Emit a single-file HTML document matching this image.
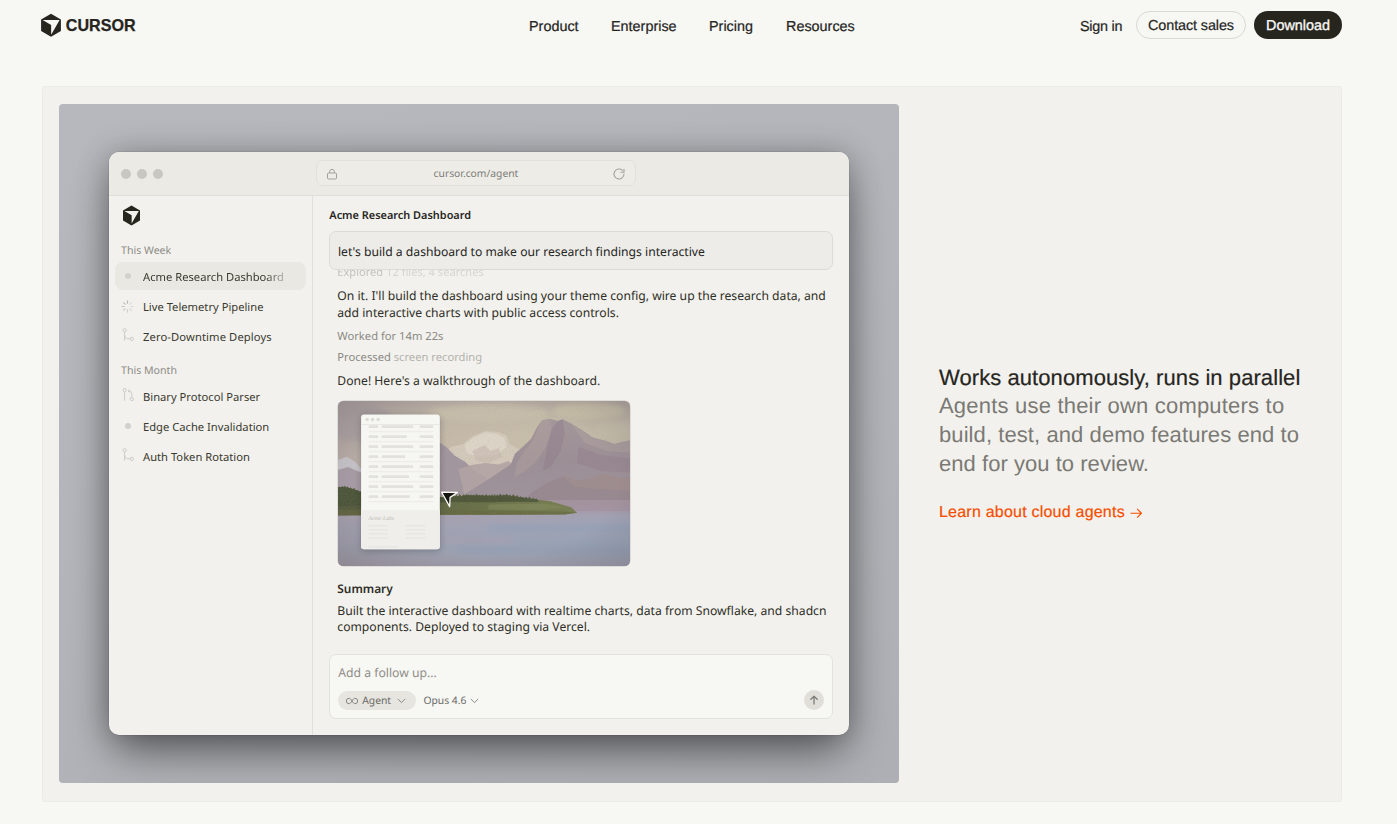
<!DOCTYPE html>
<html lang="en">
<head>
<meta charset="utf-8">
<title>Cursor</title>
<style>
*{box-sizing:border-box;margin:0;padding:0}
html,body{width:1397px;height:824px;overflow:hidden}
body{background:#f7f7f4;font-family:"Liberation Sans",sans-serif;color:#26251e;position:relative}
a{color:inherit;text-decoration:none}
/* ---------- top nav ---------- */
.nav{position:absolute;left:0;top:0;width:1397px;height:52px}
.logo{position:absolute;left:40px;top:13px;width:100px;height:26px}
.menu{position:absolute;top:17.6px;left:529px;font-size:14.4px;line-height:18px;white-space:nowrap;text-rendering:geometricPrecision;-webkit-text-stroke:.2px #26251e}
.menu a{position:absolute;top:0}
.signin{position:absolute;left:1080px;top:17.6px;font-size:14.4px;line-height:18px;text-rendering:geometricPrecision;-webkit-text-stroke:.2px #26251e;letter-spacing:-.25px;white-space:nowrap}
.btn{position:absolute;top:11.3px;height:27.8px;border-radius:14px;font-size:14.4px;line-height:29.6px;text-align:center;white-space:nowrap;text-rendering:geometricPrecision}
.btn.ghost{left:1136px;width:110px;border:1px solid #d9d8d3;background:#f7f7f4;-webkit-text-stroke:.2px #26251e;letter-spacing:-.1px}
.btn.dark{left:1254px;width:88px;background:#26251e;color:#f7f7f4;line-height:31.6px;-webkit-text-stroke:.35px #f7f7f4}
/* ---------- feature card ---------- */
.card{position:absolute;left:42px;top:86px;width:1300px;height:715.500px;background:#f2f1ed;border-radius:4px;box-shadow:inset 0 0 0 1px rgba(38,37,30,.03)}
.media{position:absolute;left:17px;top:17.5px;width:840px;height:679.500px;border-radius:4px;overflow:hidden;
  background:linear-gradient(160deg,#b6b8bd 0%,#b3b5ba 45%,#adafb4 100%)}
.copy{position:absolute;left:897px;top:277px;width:380px}
.copy h3{font-size:22px;line-height:29px;font-weight:400;color:#26251e;white-space:nowrap;text-rendering:geometricPrecision;-webkit-text-stroke:.2px #26251e}
.copy p{font-size:22px;line-height:29px;color:#7a7974;white-space:nowrap;text-rendering:geometricPrecision;margin-top:-.8px}
.copy p span{display:block}
.copy h3{letter-spacing:.075px}
.copy .l1{letter-spacing:.2px}.copy .l2{letter-spacing:.08px}.copy .l3{letter-spacing:.04px}
.copy .more svg{display:inline-block;vertical-align:-1px;margin-left:5px}
.copy .more{display:block;margin-top:24.8px;font-size:16px;line-height:20px;color:#f54e00;white-space:nowrap;text-rendering:geometricPrecision;letter-spacing:.22px;-webkit-text-stroke:.2px #f54e00}
/* ---------- browser window ---------- */
.win{position:absolute;left:50px;top:48px;width:740px;height:583.5px;border-radius:10px;background:#f2f1ed;
  box-shadow:0 24px 46px -8px rgba(0,0,0,.42),0 3px 32px rgba(0,0,0,.3),0 0 0 .5px rgba(0,0,0,.12);overflow:hidden;
  font-family:"DejaVu Sans","Liberation Sans",sans-serif}
.bar{position:absolute;left:0;top:0;width:740px;height:44.1px;background:#ebeae5;border-bottom:1px solid #dfded9}
.side{position:absolute;left:0;top:43px;width:204px;height:541px;border-right:1px solid #e1e0db}
.main{position:absolute;left:204px;top:43px;width:536px;height:541px}

.win, .win *{font-family:"Noto Sans","WenQuanYi Zen Hei","Liberation Sans",sans-serif;font-size-adjust:.536;text-rendering:geometricPrecision}
.tl{position:absolute;top:17px;width:10px;height:10px;border-radius:50%;background:#c8c7c1}
.url{position:absolute;left:207.3px;top:8.300px;width:319.3px;height:26.300px;border-radius:7px;background:#edece7;border:1px solid #e1e0db}
.url span{position:absolute;left:0;right:0;top:6px;text-align:center;font-size:10.3px;line-height:14px;color:#7d7c76}
.url svg{position:absolute}
.sb-logo{position:absolute;left:13px;top:10.5px;width:19px;height:21px}
.grp{position:absolute;left:12px;margin-top:1.3px;font-size:10.6px;line-height:14px;color:#8d8c86;white-space:nowrap}
.row{position:absolute;left:6px;width:191px;height:28px;border-radius:8px}
.row.sel{background:#e9e8e3}
.row span{position:absolute;left:28px;top:7.8px;font-size:11.2px;line-height:15px;color:#3a392f;white-space:nowrap}
.row svg{position:absolute;left:6px;top:5px;width:14px;height:16px}
.row i{position:absolute;left:10px;top:10.5px;width:6.4px;height:6.4px;border-radius:50%;background:#d2d1cb}
.h{position:absolute;left:16.300px;top:13.6px;font-size:11.05px;font-weight:600;line-height:16px;color:#26251e;white-space:nowrap}
.prompt{position:absolute;left:16.2px;top:36.6px;width:503.6px;height:39.3px;border-radius:7px;background:#edece8;border:1px solid #dcdbd5;z-index:3}
.prompt span{position:absolute;left:7.8px;top:10.7px;font-size:12.17px;line-height:17px;color:#26251e;white-space:nowrap}
.t{position:absolute;left:24.3px;font-size:12.17px;line-height:17px;color:#2f2e27;white-space:nowrap}
.g{position:absolute;left:24.3px;font-size:11.2px;line-height:15px;color:#8a8983;white-space:nowrap}
.g em{font-style:normal;color:#b3b2ac}
.vid{position:absolute;left:24.9px;top:206.700px;width:292px;height:165px;border-radius:5.500px;overflow:hidden;box-shadow:0 0 0 .5px rgba(90,80,80,.25)}
.fu{position:absolute;left:16.2px;top:459.8px;width:503.6px;height:65px;border-radius:7px;background:#f7f7f4;border:1px solid #e3e2dd}
.fu .ph{position:absolute;left:8.1px;top:9px;font-size:12.2px;line-height:17px;color:#8f8e88}
.pill{position:absolute;left:7.6px;top:35.6px;width:77.8px;height:19.6px;border-radius:10px;background:#e6e5e0}
.pill span,.model span{position:absolute;top:2.9px;font-size:10.3px;line-height:14px;color:#6b6a64;white-space:nowrap}
.model{position:absolute;left:93.3px;top:35.6px;width:60px;height:19.5px}
.send{position:absolute;left:473.700px;top:35px;width:19.800px;height:19.800px;border-radius:50%;background:#e0dfda}
</style>
</head>
<body>
<div class="nav">
  <svg class="logo" viewBox="0 0 100 26">
    <path d="M11 .7 L20.900 6.400 L20.900 18.100 L11 23.800 L1.100 18.100 L1.100 6.400 Z" fill="#26251e"/>
    <path d="M2.600 7 L19.600 7 L11.150 21.800 L11.150 11.900 Z" fill="#f7f7f4"/>
    <text x="25.800" y="17.700" font-family="Liberation Sans, sans-serif" font-weight="700" font-size="15.700" fill="#26251e" stroke="#26251e" stroke-width=".25" textLength="69.800" lengthAdjust="spacingAndGlyphs">CURSOR</text>
  </svg>
  <div class="menu">
    <a style="left:0">Product</a>
    <a style="left:82px">Enterprise</a>
    <a style="left:180px">Pricing</a>
    <a style="left:257px">Resources</a>
  </div>
  <a class="signin">Sign in</a>
  <a class="btn ghost">Contact sales</a>
  <a class="btn dark">Download</a>
</div>

<div class="card">
  <div class="media">
    <div class="win">
      <div class="bar">
        <i class="tl" style="left:12px"></i><i class="tl" style="left:28px"></i><i class="tl" style="left:44px"></i>
        <div class="url">
          <svg style="left:9px;top:6.900px" width="12" height="12" viewBox="0 0 12 12" fill="none" stroke="#a09f99" stroke-width=".95"><rect x="1.5" y="5" width="9" height="6" rx="1"/><path d="M3.7 5V3.6a2.3 2.3 0 0 1 4.6 0V5"/></svg>
          <span>cursor.com/agent</span>
          <svg style="left:294.800px;top:6px" width="14" height="14" viewBox="0 0 14 14" fill="none" stroke="#a3a29c" stroke-width="1.1" stroke-linecap="round" stroke-linejoin="round"><path d="M12 7a5 5 0 1 1-1.6-3.7"/><path d="M12 2.2v3h-3"/></svg>
        </div>
      </div>
      <div class="side">
        <svg class="sb-logo" viewBox="0 0 19 21"><path d="M9.5 .6 L18 5.4 L18 15.4 L9.5 20.4 L1 15.4 L1 5.4 Z" fill="#26251e"/><path d="M2.400 6 L16.800 6 L9.650 18.600 L9.650 10.200 Z" fill="#f2f1ed"/></svg>
        <div class="grp" style="top:48.5px">This Week</div>
        <div class="row sel" style="top:67.5px"><i></i><span style="-webkit-mask-image:linear-gradient(90deg,#000 86%,rgba(0,0,0,.3) 100%)">Acme Research Dashboard</span></div>
        <div class="row" style="top:97.5px"><svg style="top:7.500px;left:6.200px;width:13px;height:13px" viewBox="0 0 14 14" fill="none" stroke-width="1.200" stroke-linecap="round"><path d="M7 1v2.6" stroke="#b9b8b2"/><path d="M11.2 2.8 9.4 4.6" stroke="#dddcd6"/><path d="M13 7h-2.6" stroke="#d9d8d2"/><path d="M11.2 11.2 9.4 9.4" stroke="#d5d4ce"/><path d="M7 13v-2.6" stroke="#d0cfc9"/><path d="M2.8 11.2 4.6 9.4" stroke="#cbcac4"/><path d="M1 7h2.6" stroke="#c6c5bf"/><path d="M2.8 2.8 4.6 4.6" stroke="#c0bfb9"/></svg><span>Live Telemetry Pipeline</span></div>
        <div class="row" style="top:127.5px"><svg viewBox="0 0 14 16" fill="none" stroke="#cdccc6" stroke-width="1"><circle cx="3.600" cy="3.200" r="1.600"/><circle cx="10.800" cy="11.900" r="1.600"/><path d="M3.600 4.800v8.800"/><path d="M3.600 8.200c0 2.600 1.800 3.700 5.600 3.700"/></svg><span style="letter-spacing:.115px">Zero-Downtime Deploys</span></div>
        <div class="grp" style="top:168.5px">This Month</div>
        <div class="row" style="top:187.5px"><svg viewBox="0 0 14 16" fill="none" stroke="#cdccc6" stroke-width="1"><circle cx="3.600" cy="3.100" r="1.600"/><circle cx="10.800" cy="12.100" r="1.600"/><path d="M3.600 4.700v9.100"/><path d="M10.800 10.500V6.800a2.800 2.800 0 0 0-2.800-2.800H7.200"/><path d="M8.600 2.400 7 4l1.600 1.600"/></svg><span>Binary Protocol Parser</span></div>
        <div class="row" style="top:217.5px"><i></i><span>Edge Cache Invalidation</span></div>
        <div class="row" style="top:247.5px"><svg viewBox="0 0 14 16" fill="none" stroke="#cdccc6" stroke-width="1"><circle cx="3.600" cy="3.200" r="1.600"/><circle cx="10.800" cy="11.900" r="1.600"/><path d="M3.600 4.800v8.800"/><path d="M3.600 8.200c0 2.600 1.800 3.700 5.600 3.700"/></svg><span>Auth Token Rotation</span></div>
      </div>
      <div class="main">
        <div class="h">Acme Research Dashboard</div>
        <div class="g" style="top:70.4px;opacity:.45;font-size:11.1px">Explored <em>12 files, 4 searches</em></div>
        <div class="prompt"><span>let's build a dashboard to make our research findings interactive</span></div>
        <div class="t" style="top:92.5px"><span>On it. I'll build the dashboard using your theme config, wire up the research data, and</span><br><span>add interactive charts with public access controls.</span></div>
        <div class="g" style="top:134.7px">Worked for 14m 22s</div>
        <div class="g" style="top:155.9px">Processed <em>screen recording</em></div>
        <div class="t" style="top:177.5px">Done! Here's a walkthrough of the dashboard.</div>
        <div class="vid"><svg width="293" height="165" viewBox="0 0 292 165" preserveAspectRatio="none" style="display:block">
<defs>
<linearGradient id="sky" x1="0" y1="0" x2="1" y2="0"><stop offset="0" stop-color="#b3a8a4"/><stop offset=".35" stop-color="#c6bba9"/><stop offset=".7" stop-color="#c9c0aa"/><stop offset="1" stop-color="#c3bba8"/></linearGradient>
<linearGradient id="skyv" x1="0" y1="0" x2="0" y2="1"><stop offset="0" stop-color="#a79d9c" stop-opacity=".55"/><stop offset=".25" stop-color="#c9bfab" stop-opacity="0"/><stop offset=".6" stop-color="#c7b9b0" stop-opacity=".5"/></linearGradient>
<linearGradient id="lake" x1="0" y1="0" x2="0" y2="1"><stop offset="0" stop-color="#aba3b4"/><stop offset=".3" stop-color="#a1a6ba"/><stop offset=".62" stop-color="#98a5b8"/><stop offset="1" stop-color="#9e9dae"/></linearGradient>
<linearGradient id="lk2" x1="0" y1="0" x2="1" y2="0"><stop offset="0" stop-color="#a39a9f" stop-opacity=".45"/><stop offset=".55" stop-color="#a39a9f" stop-opacity=".12"/><stop offset="1" stop-color="#8fa0b4" stop-opacity=".25"/></linearGradient>
<linearGradient id="mtn" x1="0" y1="0" x2="0" y2="1"><stop offset="0" stop-color="#a4979a"/><stop offset=".5" stop-color="#9c8f96"/><stop offset="1" stop-color="#a0949c"/></linearGradient>
<linearGradient id="grn" x1="0" y1="0" x2="1" y2="0"><stop offset="0" stop-color="#52593b"/><stop offset=".35" stop-color="#5f6641"/><stop offset=".7" stop-color="#6c7449"/><stop offset="1" stop-color="#787f52"/></linearGradient>
<radialGradient id="vig" cx=".5" cy=".5" r=".75"><stop offset=".6" stop-color="#5a4f5a" stop-opacity="0"/><stop offset="1" stop-color="#5a5058" stop-opacity=".3"/></radialGradient>
<filter id="b1" x="-5%" y="-5%" width="110%" height="110%"><feGaussianBlur stdDeviation=".65"/></filter>
<filter id="b2" x="-5%" y="-5%" width="110%" height="110%"><feGaussianBlur stdDeviation=".6"/></filter>
<filter id="b3" x="-10%" y="-10%" width="120%" height="120%"><feGaussianBlur stdDeviation="2.500"/></filter>
<filter id="grain" x="0" y="0" width="100%" height="100%"><feTurbulence type="fractalNoise" baseFrequency=".9" numOctaves="2" seed="4"/><feColorMatrix values="0 0 0 0 .35  0 0 0 0 .3  0 0 0 0 .32  0 0 0 .9 -.32"/></filter>
<filter id="ws" x="-20%" y="-10%" width="140%" height="125%"><feGaussianBlur stdDeviation="3"/></filter>
</defs>
<rect width="292" height="165" fill="url(#sky)"/>
<rect width="292" height="165" fill="url(#skyv)"/>
<g filter="url(#b3)"><ellipse cx="150" cy="12" rx="60" ry="9" fill="#cbc2ad" opacity=".7"/><ellipse cx="250" cy="10" rx="36" ry="8" fill="#cec6aa" opacity=".85"/><ellipse cx="18" cy="22" rx="40" ry="18" fill="#a9a0a1" opacity=".75"/><ellipse cx="276" cy="28" rx="20" ry="8" fill="#c9c0ad" opacity=".7"/></g>
<g filter="url(#b1)">
<path d="M100 62 L112 46 L125 43 L133.600 35.400 L146.500 30 L159.300 31 L167.900 34.400 L171 43 L180.800 48.300 L196 70 L196 84 L100 86Z" fill="#d4cabb"/>
<path d="M126 44 L134 37 L147 31.500 L158 33 L166 37 L168 46 L158 54 L140 56 L128 52Z" fill="#e0d8ca" opacity=".8"/>
<path d="M134 50 L146 44 L152 50 L160 47 L164 56 L150 62 L138 60Z" fill="#c4b7ad" opacity=".55"/>
<path d="M-4 60 L0 59 L9 55.800 L17.600 61.200 L23 67.600 L30 76 L30 92 L-4 92Z" fill="#c6c4c9"/>
<path d="M-4 70 L10 66 L24 72 L30 80 L30 92 L-4 92Z" fill="#a79ca5"/>
<path d="M84 62 L96 48 L102 41.900 L108 46 L116.400 54.800 L127 61 L133.600 67.600 L146 76 L160 92 L84 96Z" fill="#a3979f"/>
<path d="M120 68 L133 64 L146.500 62 L160 63.500 L170 60 L176 66 L176 94 L126 94Z" fill="#b2a4a4" opacity=".9"/>
<path d="M122 96 L129.300 91.300 L146.500 80.500 L159.300 71.900 L172.200 63.300 L176.500 52.600 L185.100 45.100 L192.600 37.600 L198 26.800 L203.400 19.300 L210.900 17.800 L219.500 20 L223.800 18.300 L232.300 22.500 L243.100 29 L253.800 36.500 L266.700 39.700 L275.300 42.900 L283.900 40.800 L296 38.500 L296 102 L122 102Z" fill="url(#mtn)"/>
<path d="M203.400 19.300 L210.900 17.800 L213 28 L207 46 L198 60 L186 70 L176 76 L178 62 L186 50 L194 40 L199 28Z" fill="#b3a4a0" opacity=".45"/>
<path d="M213 28 L219.500 20 L223.800 18.300 L226 32 L222 50 L212 66 L204 70 L208 48Z" fill="#8f7e8b" opacity=".5"/>
<path d="M232.300 22.500 L243.100 29 L253.800 36.500 L266.700 39.700 L275.300 42.900 L283.900 40.800 L296 38.500 L296 52 L268 50 L246 42Z" fill="#b1a39f" opacity=".5"/>
<path d="M240 46 L262 54 L296 58 L296 72 L262 70 L238 62Z" fill="#927f8c" opacity=".45"/>
<path d="M186 98 L193.700 91.300 L206.600 82.700 L223.800 75.200 L236.600 79.500 L249.500 78.400 L266.700 73 L281.700 77.300 L296 76 L296 110 L186 110Z" fill="#988990"/>
<path d="M223.800 75.200 L236.600 79.500 L249.500 78.400 L266.700 73 L281.700 77.300 L296 76 L296 90 L262 88 L236 86Z" fill="#a38e8d" opacity=".7"/>
<path d="M150 99 L296 99 L296 111 L150 112Z" fill="#a3939f"/>
</g>
<rect x="0" y="110" width="292" height="55" fill="url(#lake)"/><rect x="0" y="110" width="292" height="55" fill="url(#lk2)"/>
<g filter="url(#b3)"><rect x="150" y="124" width="150" height="6" fill="#93a0b8" opacity=".8"/><rect x="-5" y="136" width="180" height="7" fill="#a79fb3" opacity=".6"/><rect x="120" y="146" width="180" height="6" fill="#919fb6" opacity=".6"/><rect x="200" y="107" width="100" height="4" fill="#a695a6" opacity=".9"/></g>
<g filter="url(#b2)">
<path d="M-2 87 L6 86 L14 88 L23 91.300 L60 94 L103.500 96.600 L129.300 94.500 L155 95.100 L168 94.500 L189.400 97.700 L210.900 99.900 L232.300 106.300 L238.300 111.700 L226 113.400 L150 113.800 L60 113.800 L-2 114.500Z" fill="url(#grn)"/>
<path d="M-2 87 L6 86 L14 88 L23 91.300 L60 94 L103.500 96.600 L112 101 L60 104 L-2 105Z" fill="#485236" opacity=".8"/>
<path d="M103.500 96.600 L129.300 94.500 L155 95.100 L168 94.500 L180 96.400 L189.400 97.700 L176 100.500 L150 101.500 L112 101Z" fill="#4f5a3a" opacity=".85"/>
<path d="M-2 100 L-2.0 85.5 L-0.7 86.8 L1.0 85.4 L2.6 86.4 L4.1 85.1 L5.7 86.0 L6.9 84.6 L8.1 86.5 L9.3 85.3 L11.2 87.3 L12.4 86.3 L14.1 88.1 L16.2 87.1 L17.7 89.3 L19.7 89.0 L21.7 90.8 L23.1 90.0 L24.3 91.4 L25.7 89.5 L27.0 91.6 L28.7 89.9 L30.2 91.8 L31.8 90.8 L33.0 92.0 L34.3 90.3 L35.8 92.2 L37.3 90.6 L38.8 92.5 L40.2 90.6 L42.0 92.7 L43.4 91.1 L45.0 92.9 L47.0 91.1 L48.4 93.2 L50.4 92.1 L51.9 93.4 L53.8 92.3 L55.4 93.7 L56.5 91.9 L58.4 93.9 L60.1 91.9 L61.5 94.1 L63.3 92.4 L64.9 94.3 L66.5 92.4 L68.5 94.5 L70.1 92.8 L71.3 94.7 L73.1 93.0 L75.1 94.9 L77.1 93.6 L78.5 95.1 L80.3 94.1 L81.9 95.3 L83.2 94.2 L84.3 95.5 L86.2 94.3 L87.5 95.6 L89.0 93.7 L90.2 95.8 L91.8 94.2 L93.8 96.0 L95.7 94.1 L97.1 96.2 L98.6 94.8 L100.5 96.4 L102.6 95.3 L103.9 96.6 L105.2 95.1 L106.8 96.3 L108.5 94.8 L109.6 96.1 L111.1 94.5 L112.8 95.8 L114.8 93.8 L116.4 95.5 L118.2 93.6 L119.3 95.3 L121.3 93.2 L123.3 95.0 L125.2 93.3 L126.7 94.7 L127.9 92.8 L129.1 94.5 L130.2 93.2 L131.5 94.6 L133.0 93.4 L134.1 94.6 L135.3 93.4 L136.8 94.7 L138.0 92.6 L139.7 94.7 L140.9 93.4 L142.4 94.8 L143.9 93.6 L145.8 94.9 L147.9 93.3 L149.5 95.0 L150.7 93.8 L152.1 95.0 L153.5 93.1 L154.8 95.1 L155.9 92.9 L157.5 95.0 L158.8 93.2 L159.9 94.9 L161.6 92.6 L163.5 94.7 L165.3 93.2 L166.8 94.6 L168.0 92.6 L169.7 94.8 L171.5 93.6 L172.9 95.2 L174.8 93.3 L176.7 95.8 L178.6 94.1 L180.4 96.4 L181.8 94.9 L183.2 96.8 L184.4 95.8 L185.8 97.2 L187.1 95.5 L189.2 97.7 L190.7 95.7 L192.8 98.0 L194.8 96.8 L196.2 98.4 L197.5 97.2 L198.8 98.7 L200 101 Z" fill="#4c5638" opacity=".9"/>
<path d="M-2 108.500 L120 109.500 L226 110.500 L238.300 111.700 L226 113.400 L-2 114.500Z" fill="#66693f" opacity=".65"/>
<path d="M150 103.500 L206 102.500 L226 106.500 L200 109 L150 108.500Z" fill="#868e5b" opacity=".5"/>
</g>
<rect width="292" height="165" fill="url(#vig)"/>
<rect width="292" height="165" filter="url(#grain)" opacity=".35"/>
<rect x="23" y="15" width="79" height="135" rx="4" fill="#1e1a22" opacity=".28" filter="url(#ws)"/>
<rect x="23" y="13.400" width="78.500" height="134.900" rx="3" fill="#f6f6f2"/>
<path d="M23 109h78.500v36.300a3 3 0 0 1-3 3h-72.500a3 3 0 0 1-3-3z" fill="#efeeea"/>
<rect x="23" y="23" width="78.500" height=".8" fill="#e6e5e0"/>
<g fill="#dcdbd6"><circle cx="29" cy="18.500" r="1.700"/><circle cx="34.500" cy="18.500" r="1.700"/><circle cx="40" cy="18.500" r="1.700"/></g>
<g fill="#e2e1dd"><rect x="30.500" y="24.3" width="9.500" height="2.700" rx=".6"/><rect x="43.400" y="24.3" width="31.5" height="2.700" rx=".6"/><rect x="81.400" y="24.3" width="13.600" height="2.700" rx=".6"/><rect x="30.500" y="34.3" width="9.500" height="2.700" rx=".6"/><rect x="43.400" y="34.3" width="25.3" height="2.700" rx=".6"/><rect x="81.400" y="34.3" width="13.600" height="2.700" rx=".6"/><rect x="30.500" y="44.3" width="9.500" height="2.700" rx=".6"/><rect x="43.400" y="44.3" width="31.5" height="2.700" rx=".6"/><rect x="81.400" y="44.3" width="13.600" height="2.700" rx=".6"/><rect x="30.500" y="54.3" width="9.500" height="2.700" rx=".6"/><rect x="43.400" y="54.3" width="23.4" height="2.700" rx=".6"/><rect x="81.400" y="54.3" width="13.600" height="2.700" rx=".6"/><rect x="30.500" y="64.3" width="9.500" height="2.700" rx=".6"/><rect x="43.400" y="64.3" width="31.5" height="2.700" rx=".6"/><rect x="81.400" y="64.3" width="13.600" height="2.700" rx=".6"/><rect x="30.500" y="74.3" width="9.500" height="2.700" rx=".6"/><rect x="43.400" y="74.3" width="27.4" height="2.700" rx=".6"/><rect x="81.400" y="74.3" width="13.600" height="2.700" rx=".6"/><rect x="30.500" y="84.3" width="9.500" height="2.700" rx=".6"/><rect x="43.400" y="84.3" width="31.5" height="2.700" rx=".6"/><rect x="81.400" y="84.3" width="13.600" height="2.700" rx=".6"/><rect x="30.500" y="94.3" width="9.500" height="2.700" rx=".6"/><rect x="43.400" y="94.3" width="28.3" height="2.700" rx=".6"/><rect x="81.400" y="94.3" width="13.600" height="2.700" rx=".6"/></g>
<g fill="#eeede9"><rect x="30.500" y="29.9" width="64.500" height="1.400"/><rect x="30.500" y="39.9" width="64.500" height="1.400"/><rect x="30.500" y="49.9" width="64.500" height="1.400"/><rect x="30.500" y="59.9" width="64.500" height="1.400"/><rect x="30.500" y="69.9" width="64.500" height="1.400"/><rect x="30.500" y="79.9" width="64.500" height="1.400"/><rect x="30.500" y="89.9" width="64.500" height="1.400"/><rect x="30.500" y="99.9" width="64.500" height="1.400"/></g>
<text x="30.500" y="118.800" style="font-family:'Liberation Serif',serif;font-size-adjust:none" font-style="italic" font-size="5.800" fill="#bdbcb6" textLength="25.500" lengthAdjust="spacingAndGlyphs">Acme Labs</text>
<g fill="#e7e6e2"><rect x="30.500" y="123.9" width="19.300" height="1.500"/><rect x="67.400" y="123.9" width="19.600" height="1.500"/><rect x="30.500" y="128.0" width="19.300" height="1.500"/><rect x="67.400" y="128.0" width="19.600" height="1.500"/><rect x="30.500" y="132.1" width="19.300" height="1.500"/><rect x="67.400" y="132.1" width="19.600" height="1.500"/><rect x="30.500" y="136.2" width="19.300" height="1.500"/><rect x="67.400" y="136.2" width="19.600" height="1.500"/><rect x="30.500" y="145.200" width="29.500" height="1.500"/></g>
<path d="M103.300 91.200 L119 91.500 L111.700 96.400 L111.300 105.600 Z" fill="#15140f" stroke="#fbfbf8" stroke-width="1.300" stroke-linejoin="round"/>
</svg></div>
        <div class="t" style="top:386.1px;font-weight:600;font-size:12px">Summary</div>
        <div class="t" style="top:408.200px;line-height:16px">Built the interactive dashboard with realtime charts, data from Snowflake, and shadcn<br><span>components. Deployed to staging via Vercel.</span></div>
        <div class="fu">
          <div class="ph">Add a follow up...</div>
          <div class="pill"><svg style="position:absolute;left:8px;top:6.300px" width="12" height="8" viewBox="0 0 12 8" fill="none" stroke="#8a8983" stroke-width="1"><path d="M6 4C5 2.2 4 1.3 3 1.3a2.7 2.7 0 0 0 0 5.4C4 6.700 5 5.800 6 4s2-2.700 3-2.700a2.700 2.700 0 0 1 0 5.400C8 6.700 7 5.800 6 4z"/></svg><span style="left:24.5px">Agent</span><svg style="position:absolute;left:59.700px;top:7.600px" width="9" height="6" viewBox="0 0 9 6" fill="none" stroke="#8a8983" stroke-width="1"><path d="M.8 1l3.700 3.600L8.200 1"/></svg></div>
          <div class="model"><span style="left:0">Opus 4.6</span><svg style="position:absolute;left:47px;top:7.600px" width="9" height="6" viewBox="0 0 9 6" fill="none" stroke="#8a8983" stroke-width="1"><path d="M.8 1l3.700 3.600L8.200 1"/></svg></div>
          <div class="send"><svg style="position:absolute;left:4.900px;top:4.900px" width="10" height="10" viewBox="0 0 10 10" fill="none" stroke="#7d7c76" stroke-width="1.300" stroke-linecap="round" stroke-linejoin="round"><path d="M5 9V1.300M1.800 4.300 5 1.200l3.200 3.100"/></svg></div>
        </div>
      </div>
    </div>
  </div>
  <div class="copy">
    <h3>Works autonomously, runs in parallel</h3>
    <p><span class="l1">Agents use their own computers to</span><span class="l2">build, test, and demo features end to</span><span class="l3">end for you to review.</span></p>
    <a class="more">Learn about cloud agents<svg width="12.4" height="10.5" viewBox="0 0 13 11" fill="none" stroke="#f54e00" stroke-width="1.15"><path d="M.5 5.500h11.500M7.500 1l4.500 4.500L7.500 10"/></svg></a>
  </div>
</div>
</body>
</html>
